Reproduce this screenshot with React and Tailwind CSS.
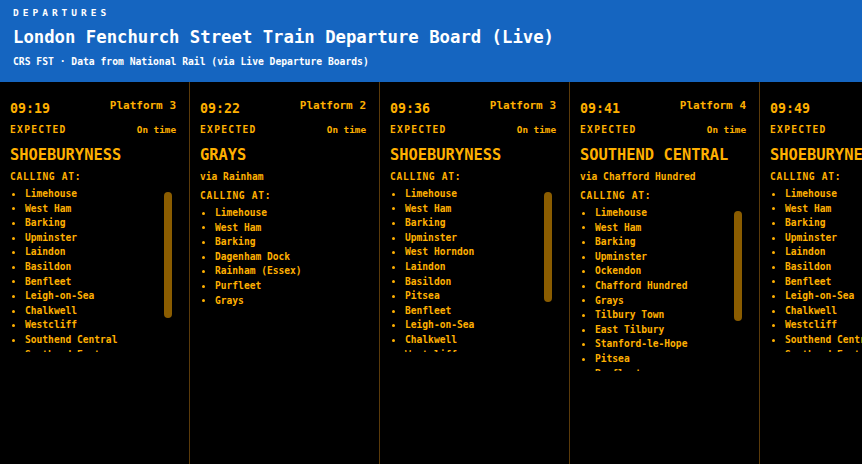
import React from 'react';

const ROW_H = 14.6;
const LIST_H = 165;
const TRACK = 156;

const services = [
  {
    time: '09:19',
    platform: '3',
    dest: 'SHOEBURYNESS',
    stops: ['Limehouse', 'West Ham', 'Barking', 'Upminster', 'Laindon', 'Basildon', 'Benfleet', 'Leigh-on-Sea', 'Chalkwell', 'Westcliff', 'Southend Central', 'Southend East', 'Thorpe Bay', 'Shoeburyness'],
  },
  {
    time: '09:22',
    platform: '2',
    dest: 'GRAYS',
    via: 'via Rainham',
    stops: ['Limehouse', 'West Ham', 'Barking', 'Dagenham Dock', 'Rainham (Essex)', 'Purfleet', 'Grays'],
  },
  {
    time: '09:36',
    platform: '3',
    dest: 'SHOEBURYNESS',
    stops: ['Limehouse', 'West Ham', 'Barking', 'Upminster', 'West Horndon', 'Laindon', 'Basildon', 'Pitsea', 'Benfleet', 'Leigh-on-Sea', 'Chalkwell', 'Westcliff', 'Southend Central', 'Southend East', 'Thorpe Bay', 'Shoeburyness'],
  },
  {
    time: '09:41',
    platform: '4',
    dest: 'SOUTHEND CENTRAL',
    via: 'via Chafford Hundred',
    stops: ['Limehouse', 'West Ham', 'Barking', 'Upminster', 'Ockendon', 'Chafford Hundred', 'Grays', 'Tilbury Town', 'East Tilbury', 'Stanford-le-Hope', 'Pitsea', 'Benfleet', 'Leigh-on-Sea', 'Chalkwell', 'Westcliff', 'Southend Central'],
  },
  {
    time: '09:49',
    platform: '3',
    dest: 'SHOEBURYNESS',
    stops: ['Limehouse', 'West Ham', 'Barking', 'Upminster', 'Laindon', 'Basildon', 'Benfleet', 'Leigh-on-Sea', 'Chalkwell', 'Westcliff', 'Southend Central', 'Southend East', 'Thorpe Bay', 'Shoeburyness'],
  },
];

// calling points, clipped to a fixed height with a scroll thumb sized to the overflow
const Stops = ({ stops }) => {
  const contentH = stops.length * ROW_H;
  const scrolls = contentH > LIST_H;
  const thumbH = (TRACK * LIST_H) / contentH;

  return (
    <div className="relative mt-[3px] max-h-[165px] overflow-hidden">
      <ul>
        {stops.map((s, i) => (
          <li key={i} className="flex items-center h-[14.6px] text-[9.6px] font-bold text-[#ffb000]">
            <span className="w-[3px] h-[3px] rounded-full bg-[#ffb000] ml-[2px] mr-[10px]" />
            {s}
          </li>
        ))}
      </ul>
      {scrolls && (
        <div
          className="absolute right-[4px] top-[5px] w-[8px] rounded-full bg-[#8a5c00]"
          style={{ height: thumbH }}
        />
      )}
    </div>
  );
};

const ServiceColumn = ({ s }) => (
  <div className="shrink-0 w-[190px] h-full border-r border-[#5a3a0a] pt-[17px] pl-[10px] pr-[13px] text-[#ffb000]">
    <div className="flex items-center justify-between h-[20px]">
      <span className="text-[13.3px] font-bold">{s.time}</span>
      <span className="text-[11px] font-bold -mt-[5px]">Platform {s.platform}</span>
    </div>
    <div className="flex items-center justify-between h-[14px] mt-[4px]">
      <span className="text-[9.6px] font-bold tracking-[1.3px]">EXPECTED</span>
      <span className="text-[9.3px] font-bold">On time</span>
    </div>
    <div className="h-[20px] leading-[20px] mt-[8px] text-[15.4px] font-bold whitespace-nowrap">{s.dest}</div>
    {s.via && (
      <div className="h-[14px] leading-[14px] mt-[5px] text-[9.6px] font-bold whitespace-nowrap">{s.via}</div>
    )}
    <div className="h-[14px] leading-[14px] mt-[5px] text-[9.6px] font-bold tracking-[0.7px]">CALLING AT:</div>
    <Stops stops={s.stops} />
  </div>
);

export default function App() {
  return (
    <div className="w-[862px] h-[464px] bg-black overflow-hidden flex flex-col font-['DejaVu_Sans_Mono',monospace]">
      <header className="h-[82px] shrink-0 bg-[#1565c0] px-[13px] pt-[7px] text-white">
        <div className="h-[12px] leading-[12px] text-[9.5px] font-bold tracking-[4px]">DEPARTURES</div>
        <h1 className="h-[24px] leading-[24px] mt-[6px] text-[17.3px] font-bold">
          London Fenchurch Street Train Departure Board (Live)
        </h1>
        <div className="h-[14px] leading-[14px] mt-[6px] text-[9.7px] font-bold">
          CRS FST · Data from National Rail (via Live Departure Boards)
        </div>
      </header>
      <div className="flex flex-1 overflow-hidden">
        {services.map((s, i) => (
          <ServiceColumn key={i} s={s} />
        ))}
      </div>
    </div>
  );
}
